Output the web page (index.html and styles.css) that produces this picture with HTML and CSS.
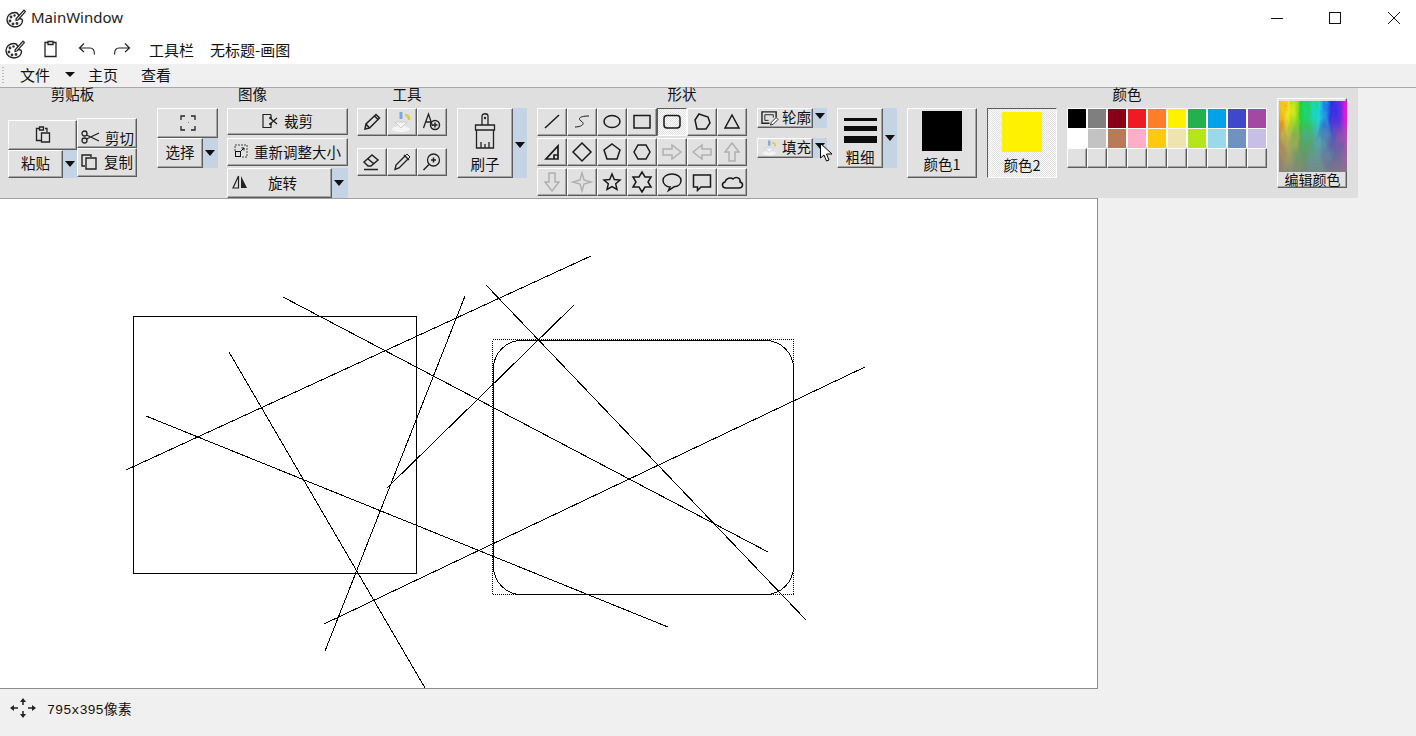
FILE: index.html
```html
<!DOCTYPE html>
<html lang="zh-CN">
<head>
    <meta charset="UTF-8">
    <meta name="viewport" content="width=device-width, initial-scale=1.0">
    <title>MainWindow</title>
    <link rel="stylesheet" href="styles.css">
</head>
<body>
    <svg class="defs" width="0" height="0">
        <defs>
            <symbol id="palette" viewBox="0 0 20 20">
                <path d="M9 4.500C4.500 4.500 1 7.500 1 11.500S4.500 19 9 19c4.500 0 7.500-3 7.500-6.500 0-2-2-1.500-3-2-1-.6-.5-2-1-3.500C12 5 10.500 4.500 9 4.500Z" fill="#fff" stroke="#222" stroke-width="1.400"/>
                <circle cx="5" cy="9" r="1.400" fill="#333"/><circle cx="4" cy="13" r="1.400" fill="#333"/><circle cx="7" cy="16" r="1.400" fill="#333"/><circle cx="11" cy="15.500" r="1.400" fill="#333"/><circle cx="8.500" cy="7.500" r="1.200" fill="#333"/>
                <path d="M10 11 18 2l1.500 1.500-7.500 8.500-2 .5Z" fill="#fff" stroke="#222" stroke-width="1.200"/>
            </symbol>
            <symbol id="bucket" viewBox="0 0 24 24">
                <ellipse cx="11" cy="19" rx="9" ry="3" fill="#f4f4f4"/>
                <path d="M11 2v7" stroke="#7da7d8" stroke-width="3"/>
                <path d="M5 12h12l-6 6Z" fill="#f7f7f7" stroke="#ccc"/>
                <path d="M15 5c3 0 4 2 4 5" fill="none" stroke="#e8c93a" stroke-width="2.500"/>
            </symbol>
            <linearGradient id="rainbow">
                <stop offset="0" stop-color="#e8342c"/><stop offset=".1" stop-color="#f08a1c"/><stop offset=".22" stop-color="#f2ea1a"/><stop offset=".38" stop-color="#22d42c"/><stop offset=".55" stop-color="#18d8e0"/><stop offset=".72" stop-color="#2a30e8"/><stop offset=".88" stop-color="#d818e0"/><stop offset="1" stop-color="#e02870"/>
            </linearGradient>
            <linearGradient id="fade" x2="0" y2="1">
                <stop offset="0" stop-color="#808080" stop-opacity="0"/><stop offset=".25" stop-color="#808080" stop-opacity=".05"/><stop offset=".5" stop-color="#808080" stop-opacity=".5"/><stop offset="1" stop-color="#808080" stop-opacity=".9"/>
            </linearGradient>
            <filter id="rough" x="0" y="0" width="100%" height="100%" color-interpolation-filters="sRGB">
                <feTurbulence type="fractalNoise" baseFrequency="0.14 0.05" numOctaves="2" seed="4"/>
                <feDisplacementMap in="SourceGraphic" scale="16" xChannelSelector="R" yChannelSelector="G"/>
            </filter>
        </defs>
    </svg>

    <header class="title-bar">
        <svg class="app-icon" width="20" height="20"><use href="#palette"/></svg>
        <span class="title-text">MainWindow</span>
        <div class="window-buttons">
            <svg width="12" height="12" viewBox="0 0 12 12"><path d="M0 6.500h12" stroke="#111"/></svg>
            <svg width="12" height="12" viewBox="0 0 12 12"><rect x=".5" y=".5" width="11" height="11" fill="none" stroke="#111"/></svg>
            <svg class="close-icon" width="12" height="12" viewBox="0 0 12 12"><path d="M0 0 12 12M12 0 0 12" stroke="#111"/></svg>
        </div>
    </header>

    <div class="quick-bar">
        <svg class="quick-app" width="20" height="20"><use href="#palette"/></svg>
        <svg class="quick-icon" width="16" height="18" viewBox="0 0 16 18"><path d="M5 2.500H2v14h11v-14h-3M5 1.500h5v3H5Z" fill="none" stroke="#222" stroke-width="1.300"/></svg>
        <svg class="quick-icon undo" width="18" height="14" viewBox="0 0 18 14"><path d="M6 1.500 1.500 6 6 10M2 6h10c3 0 4.500 2 4.500 6.500" fill="none" stroke="#222" stroke-width="1.200"/></svg>
        <svg class="quick-icon redo" width="18" height="14" viewBox="0 0 18 14"><path d="M12 1.500 16.500 6 12 10M16 6H6C3 6 1.500 8 1.500 12.500" fill="none" stroke="#222" stroke-width="1.200"/></svg>
        <span class="quick-label">工具栏</span>
        <span class="quick-label">无标题-画图</span>
    </div>

    <nav class="menu-bar">
        <span class="gripper"></span>
        <span class="menu-item">文件</span>
        <span class="menu-arrow"></span>
        <span class="menu-item">主页</span>
        <span class="menu-item">查看</span>
    </nav>

    <section class="ribbon">
        <div class="group clipboard">
            <div class="group-title">剪贴板</div>
            <div class="clip-body">
                <div class="paste-col">
                    <button class="btn paste-icon">
                        <svg width="16" height="18" viewBox="0 0 16 18"><path d="M5 2.500H1.500v12H6M10 2.500h2V6M4.500 1h4v3h-4ZM6.500 7h8v9h-8Z" fill="none" stroke="#222" stroke-width="1.300"/></svg>
                    </button>
                    <div class="split">
                        <button class="btn paste-text">粘贴</button>
                        <span class="drop"></span>
                    </div>
                </div>
                <div class="cut-col">
                    <button class="btn small-text cut">
                        <svg width="19" height="14" viewBox="0 0 19 14"><circle cx="3.500" cy="3.500" r="2.500" fill="none" stroke="#222" stroke-width="1.300"/><circle cx="3.500" cy="10.500" r="2.500" fill="none" stroke="#222" stroke-width="1.300"/><path d="M5.500 5 18 11M5.500 9 18 3" stroke="#222" stroke-width="1.300"/></svg>
                        <span>剪切</span>
                    </button>
                    <button class="btn small-text copy">
                        <svg width="18" height="16" viewBox="0 0 18 16"><path d="M4 12H1V1h9v2M5 4h10v11H5Z" fill="none" stroke="#222" stroke-width="1.400"/></svg>
                        <span>复制</span>
                    </button>
                </div>
            </div>
        </div>

        <div class="group image-group">
            <div class="group-title">图像</div>
            <div class="image-body">
                <div class="select-col">
                    <button class="btn select-icon">
                        <svg width="16" height="16" viewBox="0 0 16 16"><path d="M1 5V1h4M11 1h4v4M15 11v4h-4M5 15H1v-4" fill="none" stroke="#222" stroke-width="1.300"/><path d="M8 7.500h1" stroke="#888"/></svg>
                    </button>
                    <div class="split">
                        <button class="btn select-text">选择</button>
                        <span class="drop"></span>
                    </div>
                </div>
                <div class="image-col">
                    <button class="btn crop">
                        <svg width="16" height="14" viewBox="0 0 16 14"><path d="M9 .5H1v13h8v-4M9 .5V4" fill="none" stroke="#222" stroke-width="1.200"/><path d="M8 4 15 10M8 10l7-6" stroke="#222" stroke-width="1.300"/><circle cx="8.500" cy="4" r="1.300" fill="#222"/><circle cx="8.500" cy="10" r="1.300" fill="#222"/></svg>
                        <span>裁剪</span>
                    </button>
                    <button class="btn resize">
                        <svg width="14" height="14" viewBox="0 0 14 14"><path d="M1 7V1h12v12H7" fill="none" stroke="#444" stroke-dasharray="2 1"/><rect x="1.500" y="7.500" width="5" height="5" fill="none" stroke="#111"/><path d="M6 8 10 4M7.500 4H10v2.500" fill="none" stroke="#111"/></svg>
                        <span>重新调整大小</span>
                    </button>
                    <div class="split rotate">
                        <button class="btn rotate-btn">
                            <svg width="16" height="14" viewBox="0 0 16 14"><path d="M6.500 1v12H1Z" fill="none" stroke="#222" stroke-width="1.200"/><path d="M9 1v12h6Z" fill="#222"/></svg>
                            <span>旋转</span>
                        </button>
                        <span class="drop"></span>
                    </div>
                </div>
            </div>
        </div>

        <div class="group tools">
            <div class="group-title tools-title">工具</div>
            <div class="tool-grid">
                <button class="btn tool">
                    <svg width="18" height="18" viewBox="0 0 18 18"><path d="M2 16 3 11 13 1.500l3.500 3.500L6.500 15Z M3 11l3.500 4M11.500 3l3.500 3.500" fill="none" stroke="#222" stroke-width="1.500"/></svg>
                </button>
                <button class="btn tool"><svg width="24" height="24"><use href="#bucket"/></svg></button>
                <button class="btn tool">
                    <svg width="20" height="20" viewBox="0 0 20 20"><path d="M1.500 16 6.500 2l4 12M4 10h5" fill="none" stroke="#222" stroke-width="1.300"/><circle cx="13" cy="13" r="4.500" fill="none" stroke="#222" stroke-width="1.500"/><path d="M10.500 13h5M13 10.500v5" stroke="#222" stroke-width="1.500"/></svg>
                </button>
                <button class="btn tool">
                    <svg width="20" height="18" viewBox="0 0 20 18"><path d="M2 9 10 2l6 5-7 6H6ZM5.500 5.500l6 5M2 16.500h14" fill="none" stroke="#222" stroke-width="1.500"/></svg>
                </button>
                <button class="btn tool">
                    <svg width="18" height="18" viewBox="0 0 18 18"><path d="M2 16.500 3 12 12 3l3 3-9 9ZM11 2l5 5" fill="none" stroke="#222" stroke-width="1.400"/><path d="M12 3l2-2 3 3-2 2Z" fill="none" stroke="#222"/></svg>
                </button>
                <button class="btn tool">
                    <svg width="20" height="20" viewBox="0 0 20 20"><circle cx="11.500" cy="8" r="6" fill="none" stroke="#222" stroke-width="1.300"/><path d="M9 8h5M11.500 5.500v5M7 12.500 1.500 18" stroke="#222" stroke-width="1.500"/></svg>
                </button>
            </div>
        </div>

        <div class="group brush-group">
            <div class="group-title"></div>
            <div class="split tall">
                <button class="btn brush">
                    <svg width="22" height="36" viewBox="0 0 22 36"><path d="M8 12V3c0-3 6-3 6 0v9" fill="none" stroke="#222" stroke-width="1.300"/><circle cx="11" cy="5" r="1.200" fill="#222"/><path d="M1.500 12h19v5h-19ZM2.500 17h17v18h-17ZM7 35v-6M11 35v-4M15 35v-6" fill="#e0e0e0" stroke="#222" stroke-width="1.300"/></svg>
                    <span>刷子</span>
                </button>
                <span class="drop"></span>
            </div>
        </div>

        <div class="group shapes">
            <div class="group-title">形状</div>
            <div class="shapes-body">
                <div class="shape-grid">
                    <button class="btn shape"><svg viewBox="0 0 30 28"><path d="M8 20 22 7"/></svg></button>
                    <button class="btn shape"><svg viewBox="0 0 30 28"><path d="M22 8C14 8 10 10 14 13 19 16 14 19 8 19" stroke-width="1"/></svg></button>
                    <button class="btn shape"><svg viewBox="0 0 30 28"><ellipse cx="15" cy="13.500" rx="8" ry="6"/></svg></button>
                    <button class="btn shape"><svg viewBox="0 0 30 28"><rect x="7" y="7.500" width="16" height="12.500"/></svg></button>
                    <button class="btn shape active"><svg viewBox="0 0 30 28"><rect x="7" y="7.500" width="16" height="12.500" rx="3"/></svg></button>
                    <button class="btn shape"><svg viewBox="0 0 30 28"><path d="M12 6 21 9 23 15 19 21H10L8 12Z"/></svg></button>
                    <button class="btn shape"><svg viewBox="0 0 30 28"><path d="M15 7 22 20H8Z"/></svg></button>

                    <button class="btn shape"><svg viewBox="0 0 30 28"><path d="M21 8V21H9Z M17 21V17H21" stroke-width="1.700"/></svg></button>
                    <button class="btn shape"><svg viewBox="0 0 30 28"><path d="M15 5 24 14 15 23 6 14Z"/></svg></button>
                    <button class="btn shape"><svg viewBox="0 0 30 28"><path d="M15 6 23 12 20 21H10L7 12Z"/></svg></button>
                    <button class="btn shape"><svg viewBox="0 0 30 28"><path d="M11 7H19L23 14 19 21H11L7 14Z"/></svg></button>
                    <button class="btn shape muted"><svg viewBox="0 0 30 28"><path d="M6 11H15V7L24 14 15 21V17H6Z"/></svg></button>
                    <button class="btn shape muted"><svg viewBox="0 0 30 28"><path d="M24 11H15V7L6 14 15 21V17H24Z"/></svg></button>
                    <button class="btn shape muted"><svg viewBox="0 0 30 28"><path d="M15 5 22 14H18V23H12V14H8Z"/></svg></button>

                    <button class="btn shape muted"><svg viewBox="0 0 30 28"><path d="M15 23 22 14H18V5H12V14H8Z"/></svg></button>
                    <button class="btn shape muted"><svg viewBox="0 0 30 28"><path d="M15 5 17 12 24 14 17 16 15 23 13 16 6 14 13 12Z"/></svg></button>
                    <button class="btn shape"><svg viewBox="0 0 30 28"><path d="M15 6 17.300 11.500 23 12 18.700 15.800 20 21.500 15 18.500 10 21.500 11.300 15.800 7 12 12.700 11.500Z"/></svg></button>
                    <button class="btn shape"><svg viewBox="0 0 30 28"><path d="M15 4 18 9 24 9 21 14 24 19 18 19 15 24 12 19 6 19 9 14 6 9 12 9Z"/></svg></button>
                    <button class="btn shape"><svg viewBox="0 0 30 28"><path d="M15 6C10 6 6 8.500 6 12.500S10 19 13 19L11.500 22.500 17 18.800C21 18.500 24 16 24 12.500S20 6 15 6Z"/></svg></button>
                    <button class="btn shape"><svg viewBox="0 0 30 28"><path d="M6.500 7H23.500V19H14L10.500 22.500V19H6.500Z"/></svg></button>
                    <button class="btn shape"><svg viewBox="0 0 30 28"><path d="M9 20C5 20 4 15 8 14 9 10 14 9 16 11 19 8 24 10 23 14 27 15 26 20 22 20Z"/></svg></button>
                </div>
                <div class="outline-col">
                    <div class="split mini">
                        <button class="btn mini-btn">
                            <svg width="18" height="17" viewBox="0 0 19 18"><path d="M9 14H1V2h15v6" fill="none" stroke="#222" stroke-width="1.500"/><path d="M4 5h9v3M4 5v6h4" fill="none" stroke="#222"/><path d="M10 16l1-3 5-5 2 2-5 5Z" fill="#fff" stroke="#222"/></svg>
                            <span>轮廓</span>
                        </button>
                        <span class="drop"></span>
                    </div>
                    <div class="split mini">
                        <button class="btn mini-btn">
                            <svg width="18" height="18"><use href="#bucket"/></svg>
                            <span>填充</span>
                        </button>
                        <span class="drop"></span>
                    </div>
                </div>
            </div>
        </div>

        <div class="group thick-group">
            <div class="group-title"></div>
            <div class="split thick">
                <button class="btn thick-btn">
                    <span class="bar bar-1"></span>
                    <span class="bar bar-2"></span>
                    <span class="bar bar-3"></span>
                    <span class="thick-label">粗细</span>
                </button>
                <span class="drop"></span>
            </div>
        </div>

        <div class="group colors">
            <div class="group-title">颜色</div>
            <div class="colors-body">
                <button class="btn color-btn">
                    <span class="swatch black"></span>
                    <span class="color-label">颜色1</span>
                </button>
                <button class="btn color-btn active">
                    <span class="swatch yellow"></span>
                    <span class="color-label">颜色2</span>
                </button>
                <div class="palette">
                    <span class="cell c1"></span><span class="cell c2"></span><span class="cell c3"></span><span class="cell c4"></span><span class="cell c5"></span><span class="cell c6"></span><span class="cell c7"></span><span class="cell c8"></span><span class="cell c9"></span><span class="cell c10"></span>
                    <span class="cell c11"></span><span class="cell c12"></span><span class="cell c13"></span><span class="cell c14"></span><span class="cell c15"></span><span class="cell c16"></span><span class="cell c17"></span><span class="cell c18"></span><span class="cell c19"></span><span class="cell c20"></span>
                    <span class="btn blank"></span><span class="btn blank"></span><span class="btn blank"></span><span class="btn blank"></span><span class="btn blank"></span><span class="btn blank"></span><span class="btn blank"></span><span class="btn blank"></span><span class="btn blank"></span><span class="btn blank"></span>
                </div>
                <button class="btn edit-color">
                    <svg width="68" height="71" viewBox="0 0 68 71"><rect x="-11" y="-11" width="90" height="93" fill="url(#rainbow)" filter="url(#rough)"/><rect width="68" height="71" fill="url(#fade)"/></svg>
                    <span>编辑颜色</span>
                </button>
            </div>
        </div>
    </section>

    <main class="work-area">
        <svg class="canvas" width="1097" height="489" viewBox="0 199 1097 489">
            <rect x="133.500" y="316.500" width="283" height="257"/>
            <rect x="493.500" y="340.500" width="300" height="254" rx="28"/>
            <rect class="sel" x="492.500" y="339.500" width="301" height="255"/>
            <line x1="126" y1="470" x2="591" y2="256"/>
            <line x1="283" y1="297" x2="768" y2="552"/>
            <line x1="229" y1="352" x2="425" y2="688"/>
            <line x1="146" y1="416" x2="668" y2="627"/>
            <line x1="465" y1="296" x2="325" y2="651"/>
            <line x1="574" y1="305" x2="387" y2="488"/>
            <line x1="486" y1="285" x2="806" y2="620"/>
            <line x1="324" y1="624" x2="865" y2="367"/>
        </svg>
    </main>

    <footer class="status-bar">
        <svg width="26" height="22" viewBox="0 0 26 22"><path d="M13 3v5M13 14v5M2 11h6M18 11h6" stroke="#222" stroke-width="1.500"/><path d="M13 1l3 4h-6ZM13 21l3-4h-6ZM0 11l4-3v6ZM26 11l-4-3v6Z" fill="#222"/></svg>
        <span class="status-text">795x395<span class="status-cjk">像素</span></span>
    </footer>

    <svg class="cursor" width="14" height="20" viewBox="0 0 14 20"><path d="M.5.500V15L4 12l2.500 6 2.500-1-2.500-6H12Z" fill="#fff" stroke="#000"/></svg>
</body>
</html>
```

FILE: styles.css
```css
* {
    box-sizing: border-box;
}
html, body {
    margin: 0;
    height: 736px;
    overflow: hidden;
}
body {
    position: relative;
    display: flex;
    flex-direction: column;
    background-color: #f0f0f0;
    color: #111;
    font-family: "Noto Sans CJK SC", "Noto Sans", sans-serif;
    font-size: 14.500px;
}
.defs {
    position: absolute;
}

/* title bar */
.title-bar {
    display: flex;
    align-items: center;
    height: 36px;
    padding: 0 16px 0 6px;
    background: #fff;
}
.title-text {
    margin: 0 0 2px 5px;
    font-family: "Noto Sans", sans-serif;
    font-size: 15px;
    color: #222;
}
.window-buttons {
    display: flex;
    gap: 46px;
    margin-left: auto;
}
.close-icon {
    margin-left: 1px;
}

.quick-bar {
    display: flex;
    align-items: center;
    height: 28px;
    padding: 0 0 2px 5px;
    background: #fff;
    font-size: 15px;
}
.quick-app {
    margin-right: 18px;
}
.quick-icon {
    margin-right: 18px;
}
.undo {
    margin-left: 1px;
    margin-right: 17px;
}
.quick-label {
    margin-right: 16px;
}

.menu-bar {
    display: flex;
    align-items: center;
    height: 24px;
    padding-bottom: 2px;
    border-bottom: 1px solid #a8a8a8;
    background: #f0f0f0;
    font-size: 15px;
}
.gripper {
    width: 2px;
    height: 16px;
    margin: 0 16px 0 2px;
    background-image: linear-gradient(#bbb 50%, transparent 50%);
    background-size: 2px 3px;
}
.menu-item {
    margin-right: 23px;
}
.menu-arrow {
    width: 0;
    height: 0;
    margin: 0 13px 0 -8px;
    border-left: 5px solid transparent;
    border-right: 5px solid transparent;
    border-top: 5px solid #111;
}

/* ribbon */
.ribbon {
    display: flex;
    gap: 10px;
    flex: none;
    width: 1358px;
    height: 110px;
    padding-left: 8px;
    background: #dfdfdf;
}
.group-title {
    height: 20px;
    line-height: 12px;
    text-align: center;
}
.tools-title {
    padding-left: 10px;
}
.btn {
    display: block;
    padding: 0;
    border: 1px solid;
    border-color: #fff #5c5c5c #5c5c5c #fff;
    border-radius: 0;
    box-shadow: inset -1px -1px 0 #a4a4a4;
    background: #e1e1e1;
    color: #111;
    font: inherit;
}
.split {
    display: flex;
}
.drop {
    position: relative;
    flex: none;
    width: 15px;
    background: #c5d4e4;
}
.drop::after {
    content: "";
    position: absolute;
    top: 50%;
    left: 2px;
    margin-top: -3px;
    border-left: 5px solid transparent;
    border-right: 5px solid transparent;
    border-top: 6px solid #111;
}

.clipboard {
    width: 129px;
    margin-right: 10px;
}
.clip-body {
    display: flex;
}
.paste-col {
    width: 69px;
    margin-top: 12px;
}
.paste-icon {
    display: flex;
    align-items: center;
    justify-content: center;
    width: 69px;
    height: 30px;
}
.paste-text {
    width: 55px;
    height: 28px;
    padding-bottom: 4px;
}
.paste-col .drop {
    width: 14px;
}
.cut-col {
    width: 60px;
    margin-top: 10px;
}
.small-text {
    display: flex;
    align-items: center;
    gap: 5px;
    width: 60px;
    height: 30px;
    padding-left: 3px;
}
.cut {
    padding-top: 8px;
}
.copy {
    height: 29px;
    padding-bottom: 2px;
}

.image-group {
    margin-right: -1px;
}
.image-body {
    display: flex;
    gap: 9px;
}
.select-col {
    width: 61px;
}
.select-icon {
    display: flex;
    align-items: center;
    justify-content: center;
    width: 61px;
    height: 30px;
}
.select-text {
    width: 46px;
    height: 30px;
    padding-bottom: 3px;
}
.image-col {
    width: 121px;
}
.crop, .resize {
    display: flex;
    align-items: center;
    justify-content: center;
    gap: 6px;
    width: 121px;
    height: 27px;
    margin-bottom: 3px;
    padding-bottom: 2px;
}
.resize {
    height: 28px;
    margin-bottom: 2px;
    gap: 6px;
}
.rotate-btn {
    display: flex;
    align-items: center;
    gap: 20px;
    width: 105px;
    height: 30px;
    padding: 0 0 2px 4px;
}
.rotate .drop {
    width: 16px;
}

.tool-grid {
    display: grid;
    grid-template-columns: repeat(3, 30px);
    grid-auto-rows: 28px;
    row-gap: 12px;
}
.tool {
    display: flex;
    align-items: center;
    justify-content: center;
}

.tall {
    height: 70px;
}
.brush {
    display: flex;
    flex-direction: column;
    align-items: center;
    width: 56px;
    height: 70px;
    padding-top: 4px;
    line-height: 24px;
}
.brush span {
    margin-top: 3px;
}
.tall .drop {
    width: 14px;
}
.tall .drop::after {
    top: 37px;
    left: 2px;
}

.shapes-body {
    display: flex;
    gap: 10px;
}
.shape-grid {
    display: grid;
    grid-template-columns: repeat(7, 30px);
    grid-auto-rows: 28px;
    row-gap: 2px;
}
.shape {
    width: 30px;
    height: 28px;
    overflow: hidden;
}
.shape svg {
    display: block;
    width: 30px;
    height: 28px;
    margin: -1px;
    fill: none;
    stroke: #1a1a1a;
    stroke-width: 1.500;
}
.shape.muted svg {
    stroke: #b0b0b0;
}
.active {
    border-color: #5c5c5c #fff #fff #5c5c5c;
    box-shadow: none;
    background-color: #fff;
    background-image: conic-gradient(#dfdfdf 25%, #fff 0 50%, #dfdfdf 0 75%, #fff 0);
    background-size: 2px 2px;
}
.outline-col {
    display: flex;
    flex-direction: column;
    gap: 10px;
}
.mini {
    height: 20px;
}
.mini-btn {
    display: flex;
    align-items: center;
    gap: 3px;
    width: 56px;
    height: 20px;
    padding-left: 3px;
    line-height: 16px;
}
.mini-btn span {
    margin-top: -2px;
}
.mini .drop {
    width: 14px;
}
.mini .drop::after {
    top: 8px;
    left: 2px;
}

.thick {
    height: 60px;
}
.thick-btn {
    display: flex;
    flex-direction: column;
    align-items: center;
    width: 46px;
    height: 60px;
    padding-top: 9px;
}
.thick .drop {
    width: 14px;
}
.bar {
    display: block;
    width: 33px;
    background: #0c0c0c;
}
.bar-1 {
    height: 3px;
    margin-bottom: 5px;
}
.bar-2 {
    height: 5px;
    margin-bottom: 5px;
}
.bar-3 {
    height: 7px;
}
.thick-label {
    margin-top: 6px;
    line-height: 16px;
}

.colors-body {
    display: flex;
    gap: 10px;
    align-items: flex-start;
}
.color-btn {
    display: flex;
    flex-direction: column;
    align-items: center;
    width: 70px;
    height: 70px;
    padding-top: 2px;
}
.color-btn.active {
    padding-top: 3px;
}
.swatch {
    display: block;
    width: 40px;
    height: 40px;
}
.black {
    background: #000;
}
.yellow {
    background: #fff200;
}
.color-label {
    margin-top: 4px;
    line-height: 18px;
}
.palette {
    display: grid;
    grid-template-columns: repeat(10, 20px);
    grid-auto-rows: 20px;
    width: 200px;
}
.cell {
    border: 1px solid #fff;
    border-width: 1px 1px 0 1px;
}
.blank {
    width: 20px;
    height: 20px;
}
.c1 { background: #000; }
.c2 { background: #7f7f7f; }
.c3 { background: #880015; }
.c4 { background: #ed1c24; }
.c5 { background: #ff7f27; }
.c6 { background: #fff200; }
.c7 { background: #22b14c; }
.c8 { background: #00a2e8; }
.c9 { background: #3f48cc; }
.c10 { background: #a349a4; }
.c11 { background: #fff; }
.c12 { background: #c3c3c3; }
.c13 { background: #b97a57; }
.c14 { background: #ffaec9; }
.c15 { background: #ffc90e; }
.c16 { background: #efe4b0; }
.c17 { background: #b5e61d; }
.c18 { background: #99d9ea; }
.c19 { background: #7092be; }
.c20 { background: #c8bfe7; }
.edit-color {
    display: flex;
    flex-direction: column;
    align-items: center;
    width: 70px;
    height: 90px;
    margin-top: -10px;
    padding-top: 2px;
    padding-left: 1px;
    font-size: 14px;
    line-height: 14px;
}
.edit-color svg {
    display: block;
}

/* canvas */
.work-area {
    flex: none;
    height: 491px;
    width: 1098px;
    border-top: 1px solid #a0a0a0;
    border-right: 1px solid #8c8c8c;
    border-bottom: 1px solid #8c8c8c;
    background: #fff;
}
.canvas {
    display: block;
    fill: none;
    stroke: #000;
    stroke-width: 1;
    shape-rendering: crispEdges;
}
.sel {
    stroke-dasharray: 1 1;
}

.status-bar {
    display: flex;
    align-items: center;
    gap: 11px;
    height: 47px;
    padding: 0 0 10px 10px;
}
.status-text {
    font-family: "Liberation Mono", monospace;
    font-size: 13.500px;
}
.status-cjk {
    font-family: "Noto Sans CJK SC", sans-serif;
    font-size: 14px;
}

.cursor {
    position: absolute;
    left: 820px;
    top: 143px;
}
```
